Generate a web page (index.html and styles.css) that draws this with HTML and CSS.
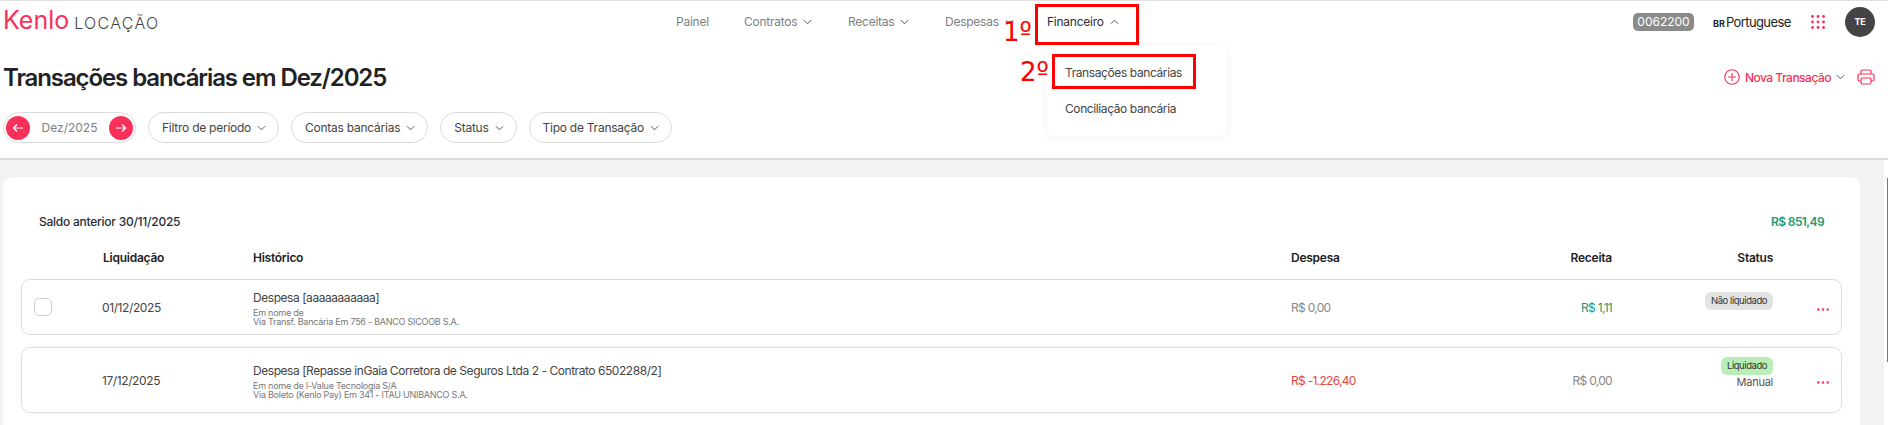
FILE: index.html
```html
<!DOCTYPE html>
<html lang="pt-BR">
<head>
    <meta charset="UTF-8">
    <title>Transações bancárias</title>
    <link rel="stylesheet" href="styles.css">
</head>
<body>
    <header class="topbar">
        <a class="logo" href="#"><span class="logo-mark">Kenlo</span><span class="logo-sub">LOCAÇÃO</span></a>
        <nav class="menu">
            <a class="menu-item menu-painel" href="#">Painel</a>
            <a class="menu-item menu-contratos" href="#">Contratos <svg class="chev" viewBox="0 0 10 6"><path d="M1 1l4 4 4-4"/></svg></a>
            <a class="menu-item menu-receitas" href="#">Receitas <svg class="chev" viewBox="0 0 10 6"><path d="M1 1l4 4 4-4"/></svg></a>
            <a class="menu-item menu-despesas" href="#">Despesas <svg class="chev" viewBox="0 0 10 6"><path d="M1 1l4 4 4-4"/></svg></a>
            <a class="menu-item menu-active" href="#">Financeiro <svg class="chev" viewBox="0 0 10 6"><path d="M1 5l4-4 4 4"/></svg></a>
        </nav>
        <div class="top-right">
            <span class="code-badge">0062200</span>
            <span class="lang"><b>BR</b> Portuguese</span>
            <svg class="apps" viewBox="0 0 14 14">
                <circle cx="1.500" cy="1.500" r="1.400"/><circle cx="7" cy="1.500" r="1.400"/><circle cx="12.500" cy="1.500" r="1.400"/>
                <circle cx="1.500" cy="7" r="1.400"/><circle cx="7" cy="7" r="1.400"/><circle cx="12.500" cy="7" r="1.400"/>
                <circle cx="1.500" cy="12.500" r="1.400"/><circle cx="7" cy="12.500" r="1.400"/><circle cx="12.500" cy="12.500" r="1.400"/>
            </svg>
            <span class="avatar">TE</span>
        </div>
    </header>

    <section class="page-head">
        <div class="title-row">
            <h1>Transações bancárias em Dez/2025</h1>
            <div class="title-actions">
                <svg class="plus" viewBox="0 0 16 16"><circle cx="8" cy="8" r="7.200"/><path d="M8 4v8M4 8h8"/></svg>
                <span class="new-label">Nova Transação</span>
                <svg class="chev" viewBox="0 0 10 6"><path d="M1 1l4 4 4-4"/></svg>
                <svg class="printer" viewBox="0 0 18 16"><path d="M4 5V2.500A1.500 1.500 0 0 1 5.500 1h7A1.500 1.500 0 0 1 14 2.500V5"/><path d="M4 12H2.500A1.500 1.500 0 0 1 1 10.500V6.500A1.500 1.500 0 0 1 2.500 5h13A1.500 1.500 0 0 1 17 6.500v4a1.500 1.500 0 0 1-1.500 1.500H14"/><rect x="4" y="9" width="10" height="6" rx="1.500"/></svg>
            </div>
        </div>
        <div class="filters">
            <div class="month-pill">
                <span class="round-btn"><svg viewBox="0 0 12 10"><path d="M11 5H1.500M5 1.500L1.500 5 5 8.500"/></svg></span>
                <span class="month-text">Dez/2025</span>
                <span class="round-btn"><svg viewBox="0 0 12 10"><path d="M1 5h9.500M7 1.500L10.500 5 7 8.500"/></svg></span>
            </div>
            <button class="filter">Filtro de período <svg class="chev" viewBox="0 0 10 6"><path d="M1 1l4 4 4-4"/></svg></button>
            <button class="filter">Contas bancárias <svg class="chev" viewBox="0 0 10 6"><path d="M1 1l4 4 4-4"/></svg></button>
            <button class="filter">Status <svg class="chev" viewBox="0 0 10 6"><path d="M1 1l4 4 4-4"/></svg></button>
            <button class="filter">Tipo de Transação <svg class="chev" viewBox="0 0 10 6"><path d="M1 1l4 4 4-4"/></svg></button>
        </div>
    </section>

    <main class="content">
        <div class="card">
            <div class="balance">
                <span>Saldo anterior 30/11/2025</span>
                <span class="green-strong">R$ 851,49</span>
            </div>
            <div class="grid-row table-head">
                <span></span>
                <span>Liquidação</span>
                <span>Histórico</span>
                <span>Despesa</span>
                <span class="right">Receita</span>
                <span class="right">Status</span>
                <span></span>
            </div>
            <div class="grid-row tx tx-first">
                <span class="check"></span>
                <span class="date">01/12/2025</span>
                <div class="hist">
                    <div class="hist-title">Despesa [aaaaaaaaaaa]</div>
                    <div class="hist-sub">Em nome de<br>Via Transf. Bancária Em 756 - BANCO SICOOB S.A.</div>
                </div>
                <span class="money muted">R$ 0,00</span>
                <span class="money green right">R$ 1,11</span>
                <div class="status"><span class="tag tag-gray">Não liquidado</span></div>
                <svg class="dots" viewBox="0 0 12 3"><circle cx="1.300" cy="1.500" r="1.200"/><circle cx="6" cy="1.500" r="1.200"/><circle cx="10.700" cy="1.500" r="1.200"/></svg>
            </div>
            <div class="grid-row tx tx-second">
                <span></span>
                <span class="date">17/12/2025</span>
                <div class="hist">
                    <div class="hist-title">Despesa [Repasse inGaia Corretora de Seguros Ltda 2 - Contrato 6502288/2]</div>
                    <div class="hist-sub">Em nome de I-Value Tecnologia S/A<br>Via Boleto (Kenlo Pay) Em 341 - ITAU UNIBANCO S.A.</div>
                </div>
                <span class="money red">R$ -1.226,40</span>
                <span class="money muted right">R$ 0,00</span>
                <div class="status"><span class="tag tag-green">Liquidado</span><span class="manual">Manual</span></div>
                <svg class="dots" viewBox="0 0 12 3"><circle cx="1.300" cy="1.500" r="1.200"/><circle cx="6" cy="1.500" r="1.200"/><circle cx="10.700" cy="1.500" r="1.200"/></svg>
            </div>
        </div>
    </main>

    <div class="scroll-track"><div class="scroll-thumb"></div></div>

    <!-- dropdown do Financeiro e marcacoes do tutorial -->
    <div class="dropdown">
        <a href="#">Transações bancárias</a>
        <a href="#">Conciliação bancária</a>
    </div>
    <div class="mark mark-menu"></div>
    <div class="mark mark-item"></div>
    <span class="step step-one">1º</span>
    <span class="step step-two">2º</span>
</body>
</html>
```

FILE: styles.css
```css
:root {
    --pink: #f9305a;
    --text: #2a2d34;
    --grey-text: #7d8087;
    --line: #dcdcdc;
}

* {
    box-sizing: border-box;
}

html, body {
    height: 425px;
    overflow: hidden;
}

body {
    margin: 0;
    background: #f2f2f2;
    color: var(--text);
    font-family: Inter, "Liberation Sans", sans-serif;
    font-size: 12px;
    letter-spacing: -0.25px;
    position: relative;
}

a {
    color: inherit;
    text-decoration: none;
}

.chev {
    width: 9px;
    height: 6px;
    fill: none;
    stroke: #555;
    stroke-width: 1.1;
    flex: none;
}

/* topo */
.topbar {
    background: #fff;
    border-top: 1px solid #e0e0e0;
    height: 46px;
    display: flex;
    align-items: center;
    padding: 0 13px 4px 3px;
}

.logo {
    display: flex;
    align-items: baseline;
    width: 673px;
    padding-bottom: 3px;
}

.logo-mark {
    color: var(--pink);
    font-weight: 400;
    font-size: 25px;
    letter-spacing: 0;
}

.logo-sub {
    color: #444;
    font-weight: 300;
    font-size: 16px;
    letter-spacing: 1.300px;
    margin-left: 5px;
}

.menu {
    display: flex;
    align-items: center;
}

.menu-item {
    color: var(--grey-text);
    display: flex;
    align-items: center;
    gap: 6px;
}

.menu-painel { width: 68px; }
.menu-contratos { width: 104px; }
.menu-receitas { width: 97px; }
.menu-despesas { width: 102px; }
.menu-active { color: var(--text); }

.top-right {
    margin-left: auto;
    display: flex;
    align-items: center;
}

.code-badge {
    background: #8a8a8a;
    color: #fff;
    border-radius: 5px;
    letter-spacing: 0;
    width: 61px;
    height: 18px;
    display: flex;
    align-items: center;
    justify-content: center;
}

.lang {
    margin-left: 19px;
    width: 78px;
    font-size: 13px;
    letter-spacing: -0.6px;
    color: #222;
    white-space: nowrap;
}

.lang b {
    font-size: 9px;
    letter-spacing: 0;
    margin-right: -2px;
}

.apps {
    width: 14px;
    height: 14px;
    fill: var(--pink);
    margin-left: 20px;
}

.avatar {
    width: 30px;
    height: 30px;
    border-radius: 50%;
    background: #444;
    color: #fff;
    font-size: 9px;
    font-weight: 700;
    display: flex;
    align-items: center;
    justify-content: center;
    margin-left: 20px;
}

/* titulo e filtros */
.page-head {
    background: #fff;
    height: 114px;
    border-bottom: 2px solid var(--line);
    padding: 0 13px 0 3px;
}

.title-row {
    display: flex;
    align-items: center;
    justify-content: space-between;
    height: 66px;
    padding-bottom: 4px;
}

h1 {
    margin: 0;
    font-size: 24px;
    font-weight: 600;
    letter-spacing: -1.1px;
    color: #222;
}

.title-actions {
    display: flex;
    align-items: center;
}

.plus {
    width: 16px;
    height: 16px;
    fill: none;
    stroke: var(--pink);
    stroke-width: 1.1;
}

.new-label {
    color: var(--pink);
    font-weight: 500;
    letter-spacing: -0.5px;
    margin: 0 5px;
}

.printer {
    width: 18px;
    height: 16px;
    fill: none;
    stroke: var(--pink);
    stroke-width: 1.2;
    margin-left: 12px;
}

.filters {
    display: flex;
    gap: 12px;
}

.month-pill {
    width: 133px;
    height: 31px;
    border: 1px solid var(--line);
    border-radius: 16px;
    display: flex;
    align-items: center;
    justify-content: space-between;
    padding: 0 2px;
}

.month-text {
    color: var(--grey-text);
    letter-spacing: 0;
}

.round-btn {
    width: 24px;
    height: 24px;
    border-radius: 50%;
    background: var(--pink);
    display: flex;
    align-items: center;
    justify-content: center;
}

.round-btn svg {
    width: 12px;
    height: 10px;
    fill: none;
    stroke: #fff;
    stroke-width: 1.2;
}

.filter {
    height: 31px;
    border: 1px solid var(--line);
    border-radius: 16px;
    background: #fff;
    color: #444;
    font: inherit;
    letter-spacing: inherit;
    padding: 0 12px 0 13px;
    display: flex;
    align-items: center;
    gap: 6px;
}

/* cartao */
.content {
    padding: 17px 28px 0 3px;
}

.card {
    background: #fff;
    border-radius: 9px 9px 0 0;
    height: 260px;
    padding: 38px 18px 0 18px;
}

.balance {
    display: flex;
    justify-content: space-between;
    padding: 0 18px;
    font-weight: 500;
    line-height: 14px;
}

.green-strong {
    color: #22996f;
    font-weight: 600;
    letter-spacing: -0.6px;
}

.grid-row {
    display: grid;
    grid-template-columns: 82px 150px 1038px 160px 161px 161px 1fr;
    align-items: center;
}

.table-head {
    margin-top: 21px;
    height: 14px;
    font-weight: 600;
    color: #222;
}

.right {
    text-align: right;
}

.tx {
    border: 1px solid var(--line);
    border-radius: 9px;
    grid-template-columns: 80px 151px 1038px 160px 161px 161px 1fr;
}

.tx-first { height: 56px; margin-top: 15px; }
.tx-second { height: 66px; margin-top: 12px; }

.check {
    width: 18px;
    height: 18px;
    margin-left: 12px;
    border: 1px solid #ccc;
    border-radius: 5px;
}

.date {
    color: #444;
    letter-spacing: -0.4px;
}

.hist {
    padding-top: 1px;
}

.hist-title {
    color: #444;
    line-height: 16px;
    letter-spacing: -0.45px;
}

.hist-sub {
    font-size: 9px;
    color: #777;
    line-height: 9px;
    margin-top: 2px;
}

.money {
    letter-spacing: -0.7px;
}

.muted { color: #888; }
.green { color: #22996f; }
.red { color: #e2463c; }

.status {
    display: flex;
    flex-direction: column;
    align-items: flex-end;
}

.tag {
    height: 18px;
    line-height: 18px;
    padding: 0 6px;
    border-radius: 6px;
    font-size: 9.500px;
    letter-spacing: -0.45px;
    color: #333;
    white-space: nowrap;
}

.tag-gray { background: #e2e2e2; margin-bottom: 12px; }
.tag-green { background: #b9eeb7; }

.manual {
    font-size: 11px;
    color: #555;
    line-height: 14px;
    margin-bottom: 14px;
}

.dots {
    width: 12px;
    height: 3px;
    fill: var(--pink);
    justify-self: end;
    margin: 4px 12px 0 0;
}

.scroll-track {
    position: absolute;
    right: 0;
    top: 160px;
    bottom: 0;
    width: 4px;
    background: #fff;
}

.scroll-thumb {
    position: absolute;
    right: 0;
    top: 18px;
    width: 1px;
    height: 184px;
    background: #777;
}

/* sobreposicoes */
.dropdown {
    position: absolute;
    left: 1047px;
    top: 46px;
    width: 180px;
    height: 90px;
    background: #fff;
    border-radius: 8px;
    box-shadow: 0 2px 8px rgba(0, 0, 0, 0.06);
    padding: 20px 18px;
    display: flex;
    flex-direction: column;
    gap: 22px;
    color: #444;
    line-height: 14px;
    letter-spacing: -0.4px;
}

.mark {
    position: absolute;
    border: 3px solid #f00;
}

.mark-menu {
    left: 1035px;
    top: 4px;
    width: 104px;
    height: 41px;
}

.mark-item {
    left: 1052px;
    top: 54px;
    width: 144px;
    height: 35px;
}

.step {
    position: absolute;
    color: #f00;
    font-family: "DejaVu Sans", sans-serif;
    font-size: 26px;
    line-height: 28px;
    letter-spacing: 0;
}

.step-one { left: 1003px; top: 18px; }
.step-two { left: 1020px; top: 58px; }
```
